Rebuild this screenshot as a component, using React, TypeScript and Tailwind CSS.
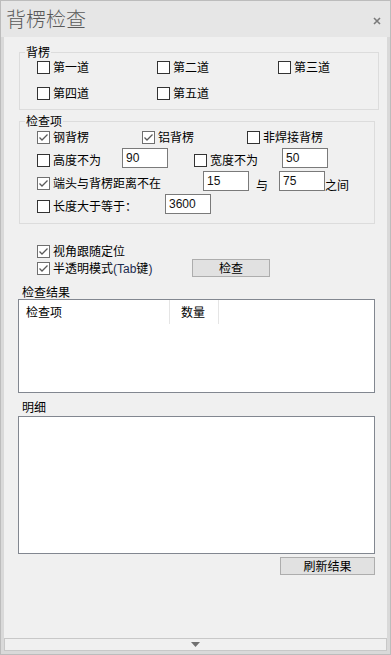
import React from 'react';

type BoxProps = { label: React.ReactNode; checked?: boolean; className?: string };

function CheckBox({ label, checked = false, className = '' }: BoxProps) {
  return (
    <div className={`flex items-center h-[16px] ${className}`}>
      <span
        className={`w-[13px] h-[13px] shrink-0 bg-white border flex items-center justify-center ${
          checked ? 'border-[#6f6f6f]' : 'border-[#333333]'
        }`}
      >
        {checked && (
          <svg width="11" height="11" viewBox="0 0 11 11">
            <polyline points="1.5,5.5 4,8 9.5,2.5" fill="none" stroke="#5a5a5a" strokeWidth="1.3" />
          </svg>
        )}
      </span>
      <span className="ml-[3px] whitespace-nowrap leading-[16px]">{label}</span>
    </div>
  );
}

function NumBox({ value, className = '' }: { value: string; className?: string }) {
  return (
    <input
      readOnly
      value={value}
      className={`w-[46px] h-[20px] shrink-0 border border-[#7a7a7a] bg-white pl-[3px] text-[12px] text-[#111] font-['Liberation_Sans',sans-serif] outline-none ${className}`}
    />
  );
}

function Btn({ label, className = '' }: { label: string; className?: string }) {
  return (
    <button
      className={`h-[18px] border border-[#adadad] bg-[#e1e1e1] text-[12px] leading-[16px] text-black flex items-center justify-center ${className}`}
    >
      {label}
    </button>
  );
}

export default function App() {
  return (
    <div className="w-[391px] h-[655px] border border-[#bcbcbc] bg-[#d9d9d9] flex flex-col text-[12px] text-black font-['Noto_Sans_CJK_SC',sans-serif] overflow-hidden">
      {/* title bar */}
      <div className="h-[36px] shrink-0 bg-[#e6e6e6] flex items-center justify-between pl-[5px] pr-[9px]">
        <span className="text-[20px] leading-[24px] font-light text-[#5a5a5a]">背楞检查</span>
        <svg width="8" height="8" viewBox="0 0 8 8" className="mt-[4px]">
          <path d="M1 1 L7 7 M7 1 L1 7" stroke="#7a7a7a" strokeWidth="1.6" />
        </svg>
      </div>

      {/* body */}
      <div className="flex-1 mx-[3px] mb-[3px] bg-[#f0f0f0] flex flex-col">
        <fieldset className="ml-[15px] mt-[8px] w-[356px] border border-[#dcdcdc] pl-[17px] pb-[8px]">
          <legend className="-ml-[12px] px-[1px] leading-[14px]">背楞</legend>
          <div className="grid grid-cols-[120px_121px_100px] gap-y-[10px]">
            <CheckBox label="第一道" />
            <CheckBox label="第二道" />
            <CheckBox label="第三道" />
            <CheckBox label="第四道" />
            <CheckBox label="第五道" />
          </div>
        </fieldset>

        <fieldset className="ml-[15px] mt-[4px] w-[356px] border border-[#dcdcdc] pl-[17px] pt-[1px] pb-[9px]">
          <legend className="-ml-[12px] px-[1px] leading-[14px]">检查项</legend>
          <div className="flex flex-col gap-[3px]">
            <div className="flex">
              <CheckBox label="钢背楞" checked className="w-[105px]" />
              <CheckBox label="铝背楞" checked className="w-[105px]" />
              <CheckBox label="非焊接背楞" />
            </div>
            <div className="flex items-start h-[20px]">
              <CheckBox label="高度不为" className="w-[85px] mt-[4px]" />
              <NumBox value="90" />
              <CheckBox label="宽度不为" className="ml-[26px] w-[88px] mt-[4px]" />
              <NumBox value="50" />
            </div>
            <div className="flex items-start h-[20px]">
              <CheckBox label="端头与背楞距离不在" checked className="w-[166px] mt-[4px]" />
              <NumBox value="15" />
              <span className="ml-[7px] mt-[6px] leading-[16px]">与</span>
              <NumBox value="75" className="ml-[11px]" />
              <span className="mt-[6px] leading-[16px]">之间</span>
            </div>
            <div className="flex items-start h-[20px]">
              <CheckBox label="长度大于等于：" className="w-[128px] mt-[4px]" />
              <NumBox value="3600" />
            </div>
          </div>
        </fieldset>

        <div className="ml-[33px] mt-[19px] flex flex-col">
          <CheckBox label="视角跟随定位" checked />
          <div className="flex items-center h-[18px]">
            <CheckBox
              label={
                <>
                  半透明模式<span className="font-['Liberation_Sans',sans-serif] text-[#1d2b50]">(Tab</span>键
                  <span className="font-['Liberation_Sans',sans-serif] text-[#1d2b50]">)</span>
                </>
              }
              checked
              className="w-[155px]"
            />
            <Btn label="检查" className="w-[78px]" />
          </div>
        </div>

        <div className="ml-[18px] mt-[8px] leading-[14px]">检查结果</div>
        <div className="ml-[14px] w-[357px] h-[94px] border border-[#828790] bg-white">
          <div className="flex h-[24px]">
            <div className="w-[151px] border-r border-[#e5e5e5] pl-[7px] flex items-center">检查项</div>
            <div className="w-[49px] border-r border-[#e5e5e5] pl-[11px] flex items-center">数量</div>
          </div>
        </div>

        <div className="ml-[18px] pt-[7px] pb-[2px] leading-[14px]">明细</div>
        <div className="ml-[14px] w-[357px] h-[138px] border border-[#828790] bg-white" />

        <div className="ml-[14px] w-[357px] mt-[3px] flex justify-end">
          <Btn label="刷新结果" className="w-[95px]" />
        </div>

        <div className="mt-auto h-[13px] border border-[#c8c8c8] flex items-center justify-center">
          <svg width="9" height="5" viewBox="0 0 9 5">
            <path d="M0 0 H9 L4.5 5 Z" fill="#707070" />
          </svg>
        </div>
      </div>
    </div>
  );
}
